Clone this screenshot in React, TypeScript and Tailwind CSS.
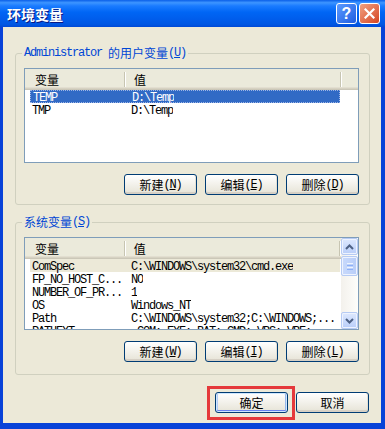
import React from "react";

const M = ({ children }: { children: React.ReactNode }) => (
  <span className="font-['Liberation_Mono',monospace] tracking-[-1.2px]">{children}</span>
);

const XpButton = ({ label, hot, isDefault }: { label: string; hot?: string; isDefault?: boolean }) => (
  <button
    className={
      isDefault
        ? "flex h-[21px] w-[73px] items-center justify-center rounded-[3px] border border-[#003C74] bg-linear-to-b from-white to-[#E6E3D6] text-[12px] leading-none text-black shadow-[inset_0_0_0_1px_#CEE7FF,inset_0_-2px_0_#6982EE,inset_2px_0_0_#B5CCF5,inset_-2px_0_0_#98B8EA]"
        : "flex h-[21px] w-[73px] items-center justify-center rounded-[3px] border border-[#003C74] bg-linear-to-b from-white to-[#E6E3D6] text-[12px] leading-none text-black shadow-[inset_0_-2px_0_#D6D0C5,inset_-1px_0_0_#E3E0D4]"
    }
  >
    <span>{label}</span>
    {hot && (
      <M>
        (<span className="underline">{hot}</span>)
      </M>
    )}
  </button>
);

const Header = () => (
  <div className="flex h-[21px] shrink-0 bg-[#EBEADB] text-[12px] leading-none text-black shadow-[inset_0_-1px_0_#CBC7B8,inset_0_-2px_0_#D6D2C2,inset_0_-3px_0_#E2DED0]">
    <div className="flex w-[99px] items-center pl-[10px]">变量</div>
    <div className="my-[3px] w-[1px] bg-[#C7C5B2]" />
    <div className="my-[3px] w-[1px] bg-white" />
    <div className="flex w-[214px] items-center pl-[8px]">值</div>
    <div className="my-[3px] w-[1px] bg-[#C7C5B2]" />
    <div className="my-[3px] w-[1px] bg-white" />
    <div className="flex-1" />
  </div>
);

type Row = { name: string; value: string; state?: "focus" | "gray" };

const ListRow = ({ row }: { row: Row }) => (
  <div className="flex h-[13px] shrink-0 pl-[5px]">
    <div
      className={
        row.state === "focus"
          ? "flex w-[310px] items-center border border-dotted border-[#9DB5E6] bg-[#316AC5] text-white"
          : row.state === "gray"
          ? "flex w-[310px] items-center bg-[#ECE9D8] text-black"
          : "flex w-[310px] items-center text-black"
      }
    >
      <span className="w-[95px] overflow-hidden whitespace-nowrap pl-[2px] text-[12px] leading-[13px]">
        <M>{row.name}</M>
      </span>
      <span className="overflow-hidden whitespace-nowrap pl-[6px] text-[12px] leading-[13px]">
        <M>{row.value}</M>
      </span>
    </div>
  </div>
);

const userVars: Row[] = [
  { name: "TEMP", value: "D:\\Temp", state: "focus" },
  { name: "TMP", value: "D:\\Temp" },
];

const sysVars: Row[] = [
  { name: "ComSpec", value: "C:\\WINDOWS\\system32\\cmd.exe", state: "gray" },
  { name: "FP_NO_HOST_C...", value: "NO" },
  { name: "NUMBER_OF_PR...", value: "1" },
  { name: "OS", value: "Windows_NT" },
  { name: "Path", value: "C:\\WINDOWS\\system32;C:\\WINDOWS;..." },
  { name: "PATHEXT", value: ".COM;.EXE;.BAT;.CMD;.VBS;.VBE;..." },
];

const ScrollBtn = ({ down }: { down?: boolean }) => (
  <div className="flex h-[17px] w-[17px] shrink-0 items-center justify-center rounded-[2px] border border-[#B6CBF4] bg-linear-to-b from-[#DDE8FE] to-[#B9CEF9] shadow-[inset_0_0_0_1px_#EEF3FE]">
    <svg width="9" height="6" viewBox="0 0 9 6">
      <polyline
        points={down ? "1,1 4.5,4.5 8,1" : "1,5 4.5,1.5 8,5"}
        fill="none"
        stroke="#4D6185"
        strokeWidth="2"
      />
    </svg>
  </div>
);

const Scrollbar = () => (
  <div className="flex w-[17px] shrink-0 flex-col bg-linear-to-r from-[#F3F1EC] to-[#FEFEFB]">
    <ScrollBtn />
    <div className="mt-[1px] flex h-[20px] w-[17px] flex-col items-center justify-center gap-[1px] rounded-[2px] border border-[#B6CBF4] bg-linear-to-r from-[#C9DAFC] to-[#B8CDF8] shadow-[inset_0_0_0_1px_#EEF3FE]">
      <div className="h-[1px] w-[6px] bg-[#EEF4FE]" />
      <div className="h-[1px] w-[6px] bg-[#8CB0F8]" />
      <div className="h-[1px] w-[6px] bg-[#EEF4FE]" />
      <div className="h-[1px] w-[6px] bg-[#8CB0F8]" />
    </div>
    <div className="flex-1" />
    <ScrollBtn down />
  </div>
);

export default function App() {
  return (
    <div className="flex h-[429px] w-[385px] flex-col bg-[#0842D8] font-['Noto_Sans_CJK_SC',sans-serif]">
      {/* title bar */}
      <div className="flex h-[27px] shrink-0 items-center bg-[linear-gradient(to_bottom,#0A5FE8_0%,#3D95FF_10%,#1A7BFF_22%,#0066F5_45%,#005DEC_70%,#0057E3_90%,#0049D6_100%)] pl-[7px] pr-[5px]">
        <span className="text-[14px] font-bold leading-none text-white [text-shadow:1px_1px_0_#0A1883]">
          环境变量
        </span>
        <div className="flex-1" />
        <div className="flex h-[21px] w-[21px] items-center justify-center rounded-[3px] border border-white bg-linear-to-br from-[#5C9BFF] to-[#1F5BE0] font-['Liberation_Sans',sans-serif] text-[16px] font-bold leading-none text-white">
          ?
        </div>
        <div className="ml-[2px] flex h-[21px] w-[21px] items-center justify-center rounded-[3px] border border-white bg-linear-to-br from-[#F0A080] to-[#D4421E]">
          <svg width="11" height="11" viewBox="0 0 11 11">
            <path d="M1.5 1.5 L9.5 9.5 M9.5 1.5 L1.5 9.5" stroke="white" strokeWidth="2.2" strokeLinecap="square" />
          </svg>
        </div>
      </div>

      {/* client */}
      <div className="mb-[6px] ml-[3px] mr-[4px] flex flex-1 flex-col bg-[#ECE9D8]">
        {/* user variables */}
        <fieldset className="ml-[12px] mr-[11px] mt-[19px] rounded-[3px] border border-[#D0D0BF]">
          <legend className="ml-[6px] flex h-[14px] items-center px-[2px] text-[12px] leading-none text-[#0046D5]">
            <M>Administrator&nbsp;</M>
            <span>的用户变量</span>
            <M>
              (<span className="underline">U</span>)
            </M>
          </legend>
          <div className="ml-[8px] mt-[8px] flex h-[95px] w-[335px] flex-col overflow-hidden border border-[#7F9DB9] bg-white">
            <Header />
            {userVars.map((r) => (
              <ListRow key={r.name} row={r} />
            ))}
          </div>
          <div className="mb-[9px] mr-[10px] mt-[11px] flex justify-end gap-[8px]">
            <XpButton label="新建" hot="N" />
            <XpButton label="编辑" hot="E" />
            <XpButton label="删除" hot="D" />
          </div>
        </fieldset>

        {/* system variables */}
        <fieldset className="ml-[12px] mr-[11px] mt-[10px] rounded-[3px] border border-[#D0D0BF]">
          <legend className="ml-[6px] flex h-[14px] items-center px-[2px] text-[12px] leading-none text-[#0046D5]">
            <span>系统变量</span>
            <M>
              (<span className="underline">S</span>)
            </M>
          </legend>
          <div className="ml-[8px] mt-[8px] flex h-[93px] w-[335px] overflow-hidden border border-[#7F9DB9] bg-white">
            <div className="flex flex-1 flex-col overflow-hidden">
              <Header />
              {sysVars.map((r) => (
                <ListRow key={r.name} row={r} />
              ))}
            </div>
            <Scrollbar />
          </div>
          <div className="mb-[12px] mr-[10px] mt-[11px] flex justify-end gap-[8px]">
            <XpButton label="新建" hot="W" />
            <XpButton label="编辑" hot="I" />
            <XpButton label="删除" hot="L" />
          </div>
        </fieldset>

        {/* ok / cancel */}
        <div className="mr-[12px] mt-[17px] flex justify-end gap-[8px]">
          <div className="relative">
            <XpButton label="确定" isDefault />
            <div className="pointer-events-none absolute -bottom-[7px] -left-[8px] -right-[7px] -top-[6px] border-[3px] border-[#E5393B]" />
          </div>
          <XpButton label="取消" />
        </div>
      </div>
    </div>
  );
}
